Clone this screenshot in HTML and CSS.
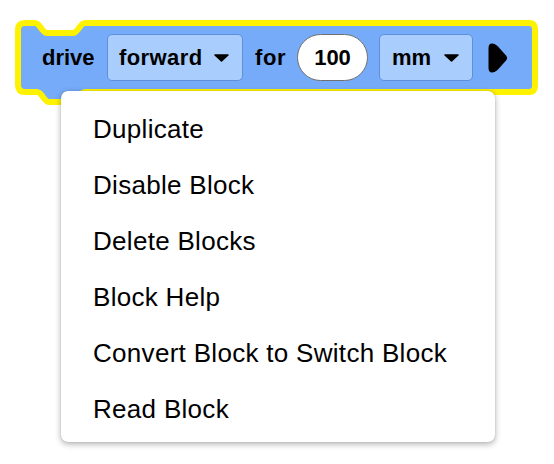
FILE: index.html
```html
<!DOCTYPE html>
<html lang="en">
<head>
<meta charset="utf-8">
<title>Block context menu</title>
<link rel="stylesheet" href="styles.css">
</head>
<body>
<div class="canvas">
  <div class="block">
    <svg class="block-shape" width="523" height="87" viewBox="0 0 523 87" aria-hidden="true">
      <path d="M10,3 L20,3 C25,3 27,13 32,13 L58,13 C63,13 65,3 70,3 L514,3 Q520,3 520,9 L520,66 Q520,72 514,72 L70,72 C65,72 63,82 58,82 L34,82 C29,82 27,72 22,72 L10,72 Q3,72 3,65 L3,10 Q3,3 10,3 Z" fill="#76abf9" stroke="#fff200" stroke-width="6" stroke-linejoin="round"/>
    </svg>
    <div class="block-row">
      <span class="label label-drive">drive</span>
      <span class="field dropdown dropdown-dir">
        <span class="field-text">forward</span>
        <svg class="caret" width="15" height="8" viewBox="0 0 15 8"><path d="M1,1 L14,1 L7.5,7 Z" fill="#000" stroke="#000" stroke-width="1.5" stroke-linejoin="round"/></svg>
      </span>
      <span class="label label-for">for</span>
      <span class="field pill">100</span>
      <span class="field dropdown dropdown-unit">
        <span class="field-text">mm</span>
        <svg class="caret" width="15" height="8" viewBox="0 0 15 8"><path d="M1,1 L14,1 L7.5,7 Z" fill="#000" stroke="#000" stroke-width="1.5" stroke-linejoin="round"/></svg>
      </span>
      <svg class="play" width="20" height="30" viewBox="0 0 20 30"><path d="M4,0.5 C1.5,0.5 0.5,2.5 0.5,5 L0.5,25 C0.5,27.5 1.5,29.5 4,29.5 C6,29.5 8,28.5 10,26.5 L18,17.5 C19.5,15.8 19.5,14.2 18,12.5 L10,3.5 C8,1.5 6,0.5 4,0.5 Z" fill="#000"/></svg>
    </div>
  </div>

  <ul class="menu">
    <li class="menu-item">Duplicate</li>
    <li class="menu-item">Disable Block</li>
    <li class="menu-item">Delete Blocks</li>
    <li class="menu-item">Block Help</li>
    <li class="menu-item">Convert Block to Switch Block</li>
    <li class="menu-item">Read Block</li>
  </ul>
</div>
</body>
</html>
```

FILE: styles.css
```css
html, body {
  margin: 0;
  padding: 0;
  background: #ffffff;
}

body {
  width: 554px;
  height: 464px;
  overflow: hidden;
  font-family: "Liberation Sans", Arial, Helvetica, sans-serif;
}

.canvas {
  position: relative;
  width: 554px;
  height: 464px;
  padding: 20px 0 0 15px;
  box-sizing: border-box;
}

.block {
  position: relative;
  width: 523px;
  height: 87px;
}

.block-shape {
  position: absolute;
  left: 0;
  top: 0;
}

.block-row {
  position: relative;
  display: flex;
  align-items: center;
  height: 47px;
  padding: 14px 0 0 27px;
  font-weight: bold;
  font-size: 22px;
  color: #000;
}

.label-drive {
  width: 51px;
  margin-right: 14px;
}

.label-for {
  width: 32px;
  margin: 0 10px 0 12px;
  letter-spacing: 0.6px;
}

.field {
  box-sizing: border-box;
  height: 47px;
  display: flex;
  align-items: center;
}

.dropdown {
  background: #a9cdfc;
  border: 1px solid #5e8fd8;
  border-radius: 5px;
  padding: 0 13px 0 11px;
}

.dropdown-dir {
  width: 136px;
}

.dropdown-dir .field-text {
  letter-spacing: 0.4px;
}

.dropdown-unit {
  width: 94px;
  padding-left: 12px;
}

.caret {
  margin-left: auto;
  display: block;
}

.pill {
  width: 71px;
  justify-content: center;
  background: #ffffff;
  border: 1px solid #707070;
  border-radius: 24px;
  margin-right: 11px;
}

.play {
  display: block;
  margin-left: 15px;
}

.menu {
  position: absolute;
  left: 61px;
  top: 91px;
  width: 434px;
  height: 351px;
  box-sizing: border-box;
  margin: 0;
  padding: 10px 0 5px 0;
  list-style: none;
  background: #ffffff;
  border-radius: 7px;
  box-shadow: 0 2px 6px rgba(0, 0, 0, 0.32), 0 0 1px rgba(0, 0, 0, 0.25);
}

.menu-item {
  height: 56px;
  line-height: 56px;
  padding-left: 32px;
  font-size: 26px;
  letter-spacing: 0.3px;
  color: #000;
  white-space: nowrap;
}
```
